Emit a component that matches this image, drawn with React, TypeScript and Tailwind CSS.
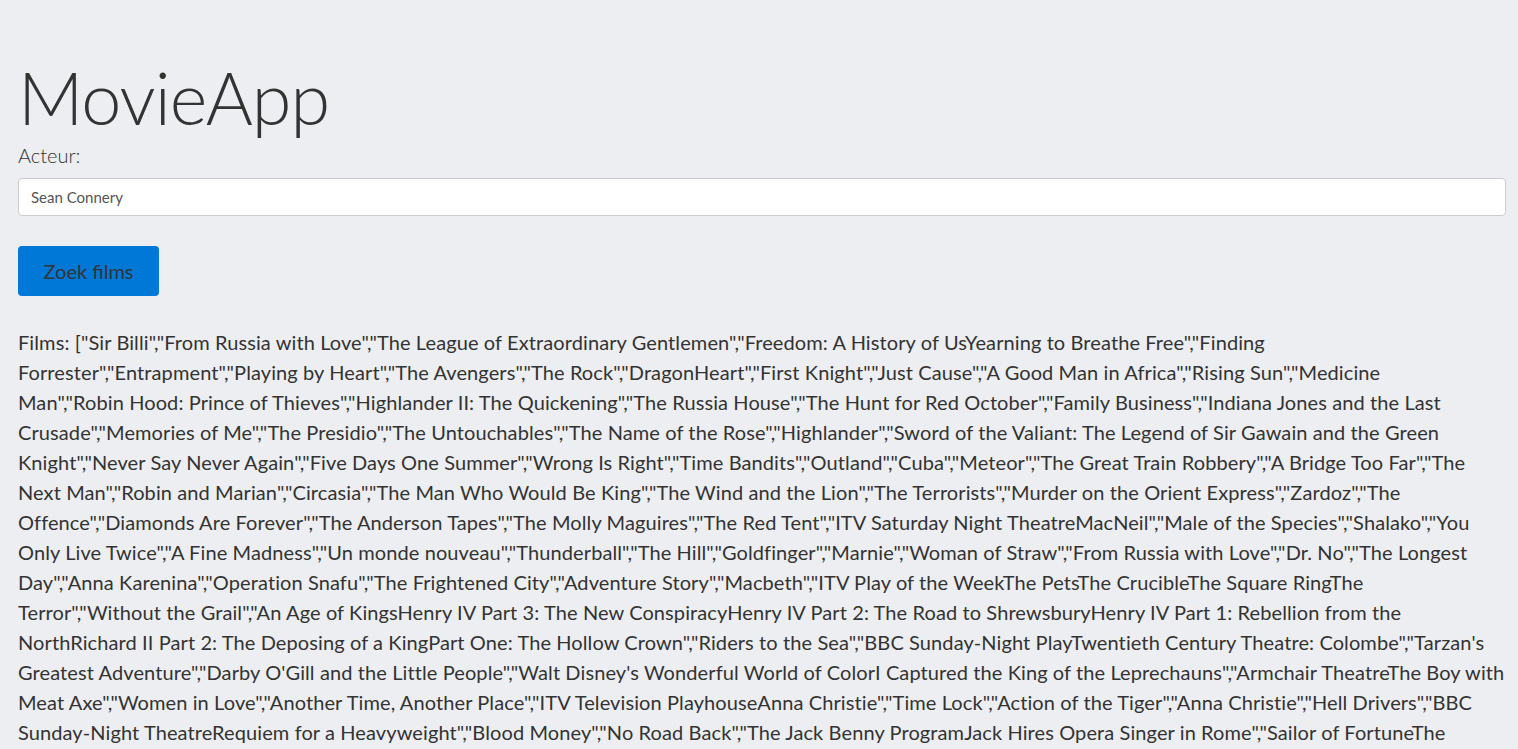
import React, { useState } from 'react';

const films = [
  'Films: ["Sir Billi","From Russia with Love","The League of Extraordinary Gentlemen","Freedom: A History of UsYearning to Breathe Free","Finding',
  'Forrester","Entrapment","Playing by Heart","The Avengers","The Rock","DragonHeart","First Knight","Just Cause","A Good Man in Africa","Rising Sun","Medicine',
  'Man","Robin Hood: Prince of Thieves","Highlander II: The Quickening","The Russia House","The Hunt for Red October","Family Business","Indiana Jones and the Last',
  'Crusade","Memories of Me","The Presidio","The Untouchables","The Name of the Rose","Highlander","Sword of the Valiant: The Legend of Sir Gawain and the Green',
  'Knight","Never Say Never Again","Five Days One Summer","Wrong Is Right","Time Bandits","Outland","Cuba","Meteor","The Great Train Robbery","A Bridge Too Far","The',
  'Next Man","Robin and Marian","Circasia","The Man Who Would Be King","The Wind and the Lion","The Terrorists","Murder on the Orient Express","Zardoz","The',
  'Offence","Diamonds Are Forever","The Anderson Tapes","The Molly Maguires","The Red Tent","ITV Saturday Night TheatreMacNeil","Male of the Species","Shalako","You',
  'Only Live Twice","A Fine Madness","Un monde nouveau","Thunderball","The Hill","Goldfinger","Marnie","Woman of Straw","From Russia with Love","Dr. No","The Longest',
  'Day","Anna Karenina","Operation Snafu","The Frightened City","Adventure Story","Macbeth","ITV Play of the WeekThe PetsThe CrucibleThe Square RingThe',
  'Terror","Without the Grail","An Age of KingsHenry IV Part 3: The New ConspiracyHenry IV Part 2: The Road to ShrewsburyHenry IV Part 1: Rebellion from the',
  'NorthRichard II Part 2: The Deposing of a KingPart One: The Hollow Crown","Riders to the Sea","BBC Sunday-Night PlayTwentieth Century Theatre: Colombe","Tarzan\'s',
  'Greatest Adventure","Darby O\'Gill and the Little People","Walt Disney\'s Wonderful World of ColorI Captured the King of the Leprechauns","Armchair TheatreThe Boy with',
  'Meat Axe","Women in Love","Another Time, Another Place","ITV Television PlayhouseAnna Christie","Time Lock","Action of the Tiger","Anna Christie","Hell Drivers","BBC',
  'Sunday-Night TheatreRequiem for a Heavyweight","Blood Money","No Road Back","The Jack Benny ProgramJack Hires Opera Singer in Rome","Sailor of FortuneThe',
];

export default function App() {
  const [actor, setActor] = useState('Sean Connery');

  return (
    <div className="min-h-screen bg-[#eceef1] text-[#333] font-['Lato',sans-serif]">
      <div className="pl-[18px] pr-[12px] pt-[54px]">
        <h1 className="text-[72px] leading-[86px] font-light tracking-[-1px] text-[#333]">MovieApp</h1>
        <label className="block text-[20px] leading-[30px] font-light text-[#333]">Acteur:</label>
        <input
          value={actor}
          onChange={(e) => setActor(e.target.value)}
          className="mt-[8px] block w-full h-[38px] px-[12px] bg-white border border-[#ccc] rounded-[4px] text-[15px] text-[#555] outline-none"
        />
        <button className="mt-[30px] w-[141px] h-[50px] bg-[#0078d7] rounded-[4px] text-[20px] text-[#333]">
          Zoek films
        </button>
        <div className="mt-[31px] text-[20px] leading-[30px] tracking-[0.1px] text-[#333]">
          {films.map((line, i) => (
            <span key={i} className="block whitespace-nowrap">{line}</span>
          ))}
        </div>
      </div>
    </div>
  );
}
